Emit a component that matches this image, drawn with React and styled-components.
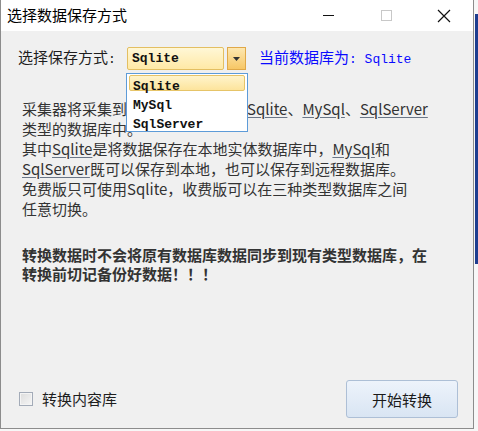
import React from "react";
import styled, { createGlobalStyle } from "styled-components";

const GlobalStyle = createGlobalStyle`
  html, body {
    margin: 0;
    padding: 0;
    background: #ffffff;
  }
  body {
    font-family: "Noto Sans CJK SC", "Liberation Sans", sans-serif;
  }
`;

const Desktop = styled.div`
  width: 478px;
  height: 431px;
  display: flex;
  align-items: flex-start;
  background: #f7f7f7;
`;

const Edge = styled.div`
  width: 3px;
  height: 250px;
  margin-top: 14px;
  margin-left: 1px;
  background: #1d3d8f;
`;

const Window = styled.div`
  width: 472px;
  height: 428px;
  border: 1px solid #8c8c8c;
  border-top: none;
  display: flex;
  flex-direction: column;
  background: #f0f0f0;
`;

const TitleBar = styled.div`
  height: 31px;
  display: flex;
  align-items: center;
  background: #ffffff;
  flex-shrink: 0;
`;

const Title = styled.div`
  flex: 1;
  padding-left: 6px;
  font-size: 15px;
  line-height: 20px;
  color: #000;
  margin-top: -1px;
`;

const Caption = styled.div`
  width: 58px;
  height: 31px;
  display: flex;
  align-items: center;
  justify-content: center;
  color: ${(p) => (p.$disabled ? "#c8c8c8" : "#111")};
`;

const Body = styled.div`
  flex: 1;
  display: flex;
  flex-direction: column;
  padding: 16px 15px 10px 17px;
`;

const Row = styled.div`
  display: flex;
  align-items: center;
  height: 23px;
`;

const Label = styled.div`
  width: 109px;
  font-family: "Noto Sans CJK SC", sans-serif;
  font-size: 15px;
  line-height: 20px;
  color: #1e1e1e;
  white-space: nowrap;
`;

const Mono = styled.span`
  font-family: "Liberation Mono", "Noto Sans CJK SC", monospace;
  font-size: 13px;
  font-weight: ${(p) => (p.$bold ? "bold" : "normal")};
`;

const Combo = styled.div`
  position: relative;
  width: 119px;
  height: 23px;
  display: flex;
  gap: 3px;
`;

const ComboField = styled.div`
  flex: 1;
  box-sizing: border-box;
  border: 1px solid #e3bf62;
  border-radius: 2px;
  background: linear-gradient(#fff7d6, #ffe9a6);
  display: flex;
  align-items: center;
  padding-left: 4px;
  color: #111;
`;

const ComboButton = styled.div`
  width: 19px;
  box-sizing: border-box;
  border: 1px solid #e0a848;
  background: linear-gradient(#fde7b0, #f7c766);
  display: flex;
  align-items: center;
  justify-content: center;
`;

const DropList = styled.div`
  position: absolute;
  top: 26px;
  left: -1px;
  width: 122px;
  height: 59px;
  box-sizing: border-box;
  border: 1px solid #5d9bd8;
  background: #ffffff;
  padding: 1px 2px;
  z-index: 2;
`;

const DropItem = styled.div`
  height: 16px;
  line-height: 14px;
  margin-bottom: 3px;
  box-sizing: border-box;
  padding-left: 3px;
  border: 1px solid ${(p) => (p.$active ? "#e6c468" : "transparent")};
  border-radius: 2px;
  background: ${(p) => (p.$active ? "linear-gradient(#fff4cc, #fde49c)" : "transparent")};
  color: #111;
`;

const Current = styled.div`
  margin-left: 13px;
  font-size: 15px;
  line-height: 20px;
  color: #0a0aff;
  white-space: nowrap;
`;

const Para = styled.div`
  margin-top: 29px;
  padding-left: 4px;
  font-size: 15px;
  line-height: 20px;
  color: #333;
  white-space: nowrap;
`;

const Warn = styled(Para)`
  margin-top: 26px;
  line-height: 19px;
  font-weight: bold;
`;

const Link = styled.span`
  text-decoration: underline;
  text-decoration-color: #6a7687;
  text-underline-offset: 2px;
`;

const Footer = styled.div`
  margin-top: auto;
  display: flex;
  align-items: center;
  justify-content: space-between;
`;

const Check = styled.label`
  display: flex;
  align-items: center;
  gap: 9px;
  padding-left: 1px;
  font-size: 15px;
  line-height: 20px;
  color: #1e1e1e;
`;

const Box = styled.span`
  width: 14px;
  height: 14px;
  box-sizing: border-box;
  border: 1px solid #a3abb8;
  background: linear-gradient(135deg, #dcdcdc, #f6f6f6);
  box-shadow: inset 0 0 0 1px #f4f4f4;
`;

const Button = styled.button`
  width: 112px;
  height: 38px;
  border: 1px solid #adbfd6;
  border-radius: 3px;
  background: linear-gradient(#edf3fb, #d9e5f3);
  font-family: "Noto Sans CJK SC", sans-serif;
  font-size: 15px;
  color: #1a1a1a;
  padding: 0;
`;

export default function App() {
  return (
    <>
      <GlobalStyle />
      <Desktop>
        <Window>
          <TitleBar>
            <Title>选择数据保存方式</Title>
            <Caption>
              <svg width="11" height="11" viewBox="0 0 11 11">
                <line x1="0" y1="5.5" x2="11" y2="5.5" stroke="currentColor" strokeWidth="1" />
              </svg>
            </Caption>
            <Caption $disabled>
              <svg width="11" height="11" viewBox="0 0 11 11">
                <rect x="0.5" y="0.5" width="10" height="10" fill="none" stroke="currentColor" strokeWidth="1" />
              </svg>
            </Caption>
            <Caption>
              <svg width="14" height="14" viewBox="0 0 14 14">
                <path d="M1 1 L13 13 M13 1 L1 13" stroke="currentColor" strokeWidth="1.2" />
              </svg>
            </Caption>
          </TitleBar>
          <Body>
            <Row>
              <Label>
                选择保存方式<Mono>:</Mono>
              </Label>
              <Combo>
                <ComboField>
                  <Mono $bold>Sqlite</Mono>
                </ComboField>
                <ComboButton>
                  <svg width="7" height="4" viewBox="0 0 7 4">
                    <path d="M0 0 L7 0 L3.5 4 Z" fill="#333" />
                  </svg>
                </ComboButton>
                <DropList>
                  <DropItem $active>
                    <Mono $bold>Sqlite</Mono>
                  </DropItem>
                  <DropItem>
                    <Mono $bold>MySql</Mono>
                  </DropItem>
                  <DropItem>
                    <Mono $bold>SqlServer</Mono>
                  </DropItem>
                </DropList>
              </Combo>
              <Current>
                当前数据库为<Mono>: Sqlite</Mono>
              </Current>
            </Row>
            <Para>
              采集器将采集到的数据可以保存到<Link>Sqlite</Link>、<Link>MySql</Link>、<Link>SqlServer</Link>
              <br />
              类型的数据库中。
              <br />
              其中<Link>Sqlite</Link>是将数据保存在本地实体数据库中，<Link>MySql</Link>和
              <br />
              <Link>SqlServer</Link>既可以保存到本地，也可以保存到远程数据库。
              <br />
              免费版只可使用Sqlite，收费版可以在三种类型数据库之间
              <br />
              任意切换。
            </Para>
            <Warn>
              转换数据时不会将原有数据库数据同步到现有类型数据库，在
              <br />
              转换前切记备份好数据！！！
            </Warn>
            <Footer>
              <Check>
                <Box />
                转换内容库
              </Check>
              <Button>开始转换</Button>
            </Footer>
          </Body>
        </Window>
        <Edge />
      </Desktop>
    </>
  );
}
